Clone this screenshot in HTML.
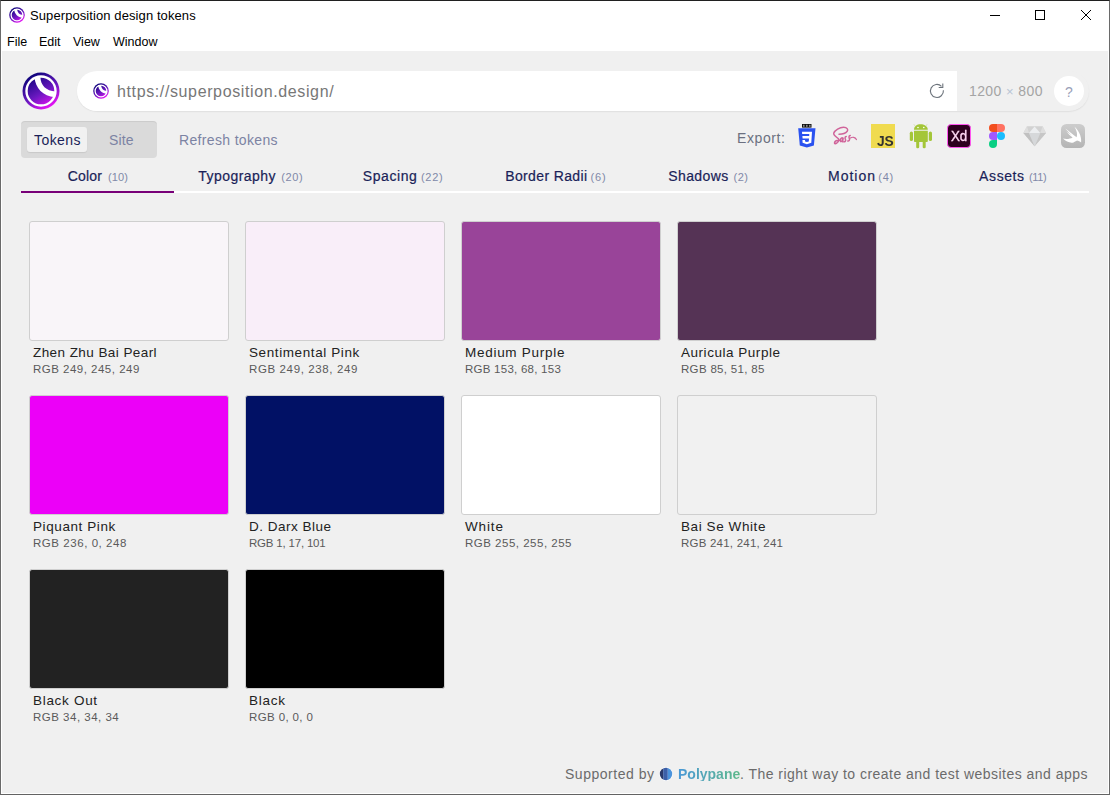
<!DOCTYPE html>
<html><head><meta charset="utf-8">
<style>
*{box-sizing:border-box;margin:0;padding:0}
html,body{width:1110px;height:795px;overflow:hidden;background:#5a5a5a;font-family:"Liberation Sans",sans-serif}
.abs{position:absolute}
#win{position:absolute;left:0;top:0;width:1110px;height:795px;border-left:1px solid #6a6a6a;border-right:1px solid #6a6a6a;border-top:1px solid #202020;border-bottom:1px solid #636363;background:#fff}
#content{position:absolute;left:1px;top:51px;width:1108px;height:743px;background:#f0f0f0;border-left:1px solid #fff;border-right:1px solid #fff;border-bottom:1px solid #fff}
.t{position:absolute;white-space:nowrap;line-height:1}
.sw{position:absolute;width:200px;height:120px;border:1px solid #cfcfcf;border-radius:3px}
.nm{position:absolute;font-size:13.5px;color:#222;white-space:nowrap;line-height:1}
.rg{position:absolute;font-size:11.5px;color:#5a5a5a;white-space:nowrap;line-height:1}
.tw{position:absolute;top:169px;font-size:14px;color:#1a1f58;white-space:nowrap;line-height:1;-webkit-text-stroke:0.2px #1a1f58}
.tc{position:absolute;top:171.6px;font-size:11px;color:#8088a8;white-space:nowrap;line-height:1}
</style></head><body>
<div id="win"></div>
<!-- title bar -->
<svg width="0" height="0" style="position:absolute"><defs>
<linearGradient id="lg2" x1="0.2" y1="0" x2="0.8" y2="1"><stop offset="0" stop-color="#000070"/><stop offset="0.55" stop-color="#6a18c0"/><stop offset="1" stop-color="#ff10ff"/></linearGradient>
<symbol id="logo" viewBox="0 0 38 38"><circle cx="19" cy="19" r="18.5" fill="url(#lg2)"/>
<circle cx="19" cy="19" r="14.5" fill="none" stroke="#fff" stroke-width="2.4"/>
<path d="M12.6 5.6 C13.2 16 21 24.5 33 25.3 L33.6 19.4 C24 19 18.6 13 18.4 5.2 Z" fill="#fff"/></symbol>
<symbol id="logos" viewBox="0 0 38 38"><circle cx="19" cy="19" r="18.5" fill="url(#lg2)"/>
<circle cx="19" cy="19" r="14" fill="none" stroke="#fff" stroke-width="3"/>
<path d="M12 5 C12.8 16.5 21 25.5 33.5 26 L34 18.6 C24.5 18.5 19.5 12.5 19.5 4.6 Z" fill="#fff"/></symbol>
</defs></svg>
<svg class="abs" style="left:9px;top:7px" width="16" height="16"><use href="#logos"/></svg>
<div class="t" style="left:30px;top:9px;font-size:13px;letter-spacing:0.09px;color:#000">Superposition design tokens</div>
<div class="abs" style="left:990px;top:15px;width:10px;height:1px;background:#000"></div>
<div class="abs" style="left:1035px;top:10px;width:10px;height:10px;border:1px solid #000"></div>
<svg class="abs" style="left:1081px;top:10px" width="10" height="10" viewBox="0 0 10 10"><path d="M0 0L10 10M10 0L0 10" stroke="#000" stroke-width="1"/></svg>
<!-- menu -->
<div class="t" style="left:7px;top:36px;font-size:12.5px;color:#000">File</div>
<div class="t" style="left:39px;top:36px;font-size:12.5px;color:#000">Edit</div>
<div class="t" style="left:73px;top:36px;font-size:12.5px;color:#000">View</div>
<div class="t" style="left:113px;top:36px;font-size:12.5px;color:#000">Window</div>

<div id="content"></div>

<!-- logo -->
<svg class="abs" style="left:22px;top:72px" width="38" height="38"><use href="#logo"/></svg>

<!-- url bar -->
<div class="abs" style="left:77px;top:71px;width:1012px;height:40px;border-radius:20px;background:#f0f0f0;box-shadow:0 1px 2px -1px rgba(0,0,0,0.22)"></div>
<div class="abs" style="left:77px;top:71px;width:880px;height:40px;border-radius:20px 0 0 20px;background:#fff"></div>
<svg class="abs" style="left:93px;top:83px" width="16" height="16"><use href="#logos"/></svg>
<div class="t" style="left:117px;top:84px;font-size:16px;letter-spacing:0.62px;color:#777">https://superposition.design/</div>
<svg class="abs" style="left:929px;top:83px" width="16" height="16" viewBox="0 0 16 16"><g fill="none" stroke="#6d747c" stroke-width="1.1"><path d="M14.4 7.3 A6.5 6.5 0 1 1 12.5 3.3"/><path d="M13.8 0.5 V4.5 H9.7"/></g></svg>
<div class="t" style="left:969px;top:84px;font-size:14px;letter-spacing:0.4px;color:#a4a4a4">1200 <span style="color:#b8c4d4;font-size:13px">×</span> 800</div>
<div class="abs" style="left:1054px;top:76px;width:30px;height:30px;border-radius:15px;background:#fff"></div>
<div class="t" style="left:1065px;top:85px;font-size:14px;color:#9aa0b8">?</div>

<!-- tokens/site -->
<div class="abs" style="left:21px;top:121px;width:136px;height:37px;border-radius:4px;background:#dadada;box-shadow:inset 0 2px 1px -1px rgba(0,0,0,0.07)"></div>
<div class="abs" style="left:27px;top:127px;width:60px;height:25px;border-radius:3px;background:#f1f1f1;box-shadow:0 1px 1px rgba(0,0,0,0.08)"></div>
<div class="t" style="left:34px;top:133px;font-size:14px;letter-spacing:0.42px;color:#1a1f58">Tokens</div>
<div class="t" style="left:109px;top:133px;font-size:14px;letter-spacing:0.1px;color:#7c83a3">Site</div>
<div class="t" style="left:179px;top:133px;font-size:14px;letter-spacing:0.34px;color:#7c83a3">Refresh tokens</div>

<!-- export -->
<div class="t" style="left:737px;top:131px;font-size:14px;letter-spacing:0.6px;color:#6b7080">Export:</div>


<!-- export icons -->
<svg class="abs" style="left:798px;top:123px" width="18" height="25" viewBox="0 0 18 25">
<rect x="4" y="1" width="9.5" height="3.6" fill="#111"/>
<rect x="5" y="1.8" width="1.6" height="2" fill="#888"/><rect x="8" y="1.8" width="1.6" height="2" fill="#888"/><rect x="11" y="1.8" width="1.6" height="2" fill="#888"/>
<path d="M0.2 5.2 H17.5 L15.9 22.4 L8.85 24.5 L1.8 22.4 Z" fill="#2a52f0"/>
<path d="M4 8.7 H14 L13.3 19.8 L8.85 21.3 L4.6 19.8 L4.45 16.9 H7 L7.1 18.5 L8.85 19 L10.8 18.5 L11 15.5 H4.6 L4.4 13.1 H11.2 L11.3 11.1 H4.15 Z" fill="#fff"/>
</svg>
<svg class="abs" style="left:832px;top:126px" width="26" height="20" viewBox="0 0 26 20">
<g fill="none" stroke="#d0649a" stroke-width="1.5" stroke-linecap="round">
<path d="M7 8.3 C10 8.3 13.5 7.5 15.2 5.3 C16.5 3.5 15 1.3 11.6 1.3 C7.5 1.3 3 4 1.8 7 C1 9.2 4.5 11 6.5 12.8 C7.5 13.8 6.5 15.5 5 16.8 C3.5 18 2.3 18 2.6 16.5 C3 15 5.5 14 8 14.3"/>
<path d="M10.5 12 C9 11.2 7.6 14.5 8.6 15.5 C9.5 16.2 10.8 13.5 11.2 11.6 L10.6 15.8"/>
<path d="M14.2 10.6 C12.6 10.8 13 12.5 13.5 13.5 C14 14.8 13 16 11.8 15.8"/>
<path d="M18.2 9.6 C16.6 9.8 16.9 11.5 17.4 12.6 C17.9 13.8 17 15.2 15.8 15"/>
<path d="M18.4 12 C20.3 10.8 23.2 10.8 24.4 13.6" stroke-width="1.2"/>
</g></svg>
<div class="abs" style="left:871px;top:124px;width:24px;height:24px;background:#f0db4f"></div>
<div class="t" style="left:877px;top:134px;font-size:14.5px;font-weight:700;color:#323330;letter-spacing:-0.3px;transform:scaleX(0.95);transform-origin:left top">JS</div>
<svg class="abs" style="left:909px;top:123px" width="24" height="26" viewBox="0 0 24 26">
<path d="M4.8 1.2 L6.3 3.2 M18.2 1.2 L16.7 3.2" stroke="#c8d890" stroke-width="0.6"/>
<path d="M5 6.8 C5 3 8 1.2 11.5 1.2 C15 1.2 18.8 3 18.8 6.8 Z" fill="#a4c639"/>
<circle cx="9" cy="4.5" r="0.8" fill="#fff"/><circle cx="14.8" cy="4.5" r="0.8" fill="#fff"/>
<path d="M5 7.7 H18.8 V18 C18.8 18.8 18.3 19.1 17.6 19.1 H6.2 C5.5 19.1 5 18.8 5 18 Z" fill="#a4c639"/>
<rect x="0.8" y="8.6" width="3.2" height="9.4" rx="1.6" fill="#a4c639"/>
<rect x="19.8" y="8.6" width="3.2" height="9.4" rx="1.6" fill="#a4c639"/>
<rect x="7.2" y="17" width="3" height="8.2" rx="1.3" fill="#a4c639"/>
<rect x="13.7" y="17" width="3" height="8.2" rx="1.3" fill="#a4c639"/>
</svg>
<div class="abs" style="left:947px;top:124px;width:24px;height:24px;background:#2e001f;border:1px solid #ff55f0;border-radius:4px"></div>
<div class="t" style="left:951px;top:128px;font-size:15.5px;color:#ffd8f4;letter-spacing:-0.3px;-webkit-text-stroke:0.35px #ffd8f4;transform:scaleX(0.86);transform-origin:left top">Xd</div>
<svg class="abs" style="left:989px;top:124px" width="16" height="24" viewBox="0 0 16 24">
<path d="M4 0 H8 V8 H4 A4 4 0 0 1 4 0 Z" fill="#f24e1e"/>
<path d="M8 0 H12 A4 4 0 0 1 12 8 H8 Z" fill="#ff7262"/>
<path d="M4 8 H8 V16 H4 A4 4 0 0 1 4 8 Z" fill="#a259ff"/>
<circle cx="12" cy="12" r="4" fill="#1abcfe"/>
<path d="M4 16 H8 V20 A4 4 0 1 1 4 16 Z" fill="#0acf83"/>
</svg>
<svg class="abs" style="left:1023px;top:126px" width="24" height="21" viewBox="0 0 24 21">
<path d="M4 0.2 H19.6 L23 7 L11.6 20.2 L0.4 7 Z" fill="#d2d2d2"/>
<path d="M0.4 7 H6 L11.6 20.2 Z" fill="#c0c0c0"/>
<path d="M23 7 H17.2 L11.6 20.2 Z" fill="#c6c6c6"/>
<path d="M6 7 H17.2 L11.6 20.2 Z" fill="#d6d8da"/>
<path d="M11.6 0.5 L17.2 7 H6 Z" fill="#eceef0"/>
<path d="M4 0.2 L6 7 H0.4 Z M19.6 0.2 L17.2 7 H23 Z" fill="#dedede"/>
</svg>
<svg class="abs" style="left:1061px;top:124px" width="24" height="24" viewBox="0 0 24 24">
<defs><linearGradient id="swg" x1="0" y1="0" x2="0" y2="1"><stop offset="0" stop-color="#cdcdcd"/><stop offset="1" stop-color="#b4b4b4"/></linearGradient></defs>
<rect x="0" y="0" width="24" height="24" rx="5.5" fill="url(#swg)"/>
<path d="M2 14.6 C5 17.6 9 19.3 12.5 18.4 C14.2 17.9 15.3 17 15.9 16.6 C17.4 16.9 19 17.6 20.1 18.5 C20.6 15 19.6 8.5 13.4 2.6 C16 7 16.6 10.5 15.6 13.2 C12.5 11 7 6.3 4.2 4.4 C6.8 7.2 9.3 9.8 10.9 11.5 C8.6 10 6.2 8.3 4.8 7.1 C7 9.6 9.8 12.2 11.6 13.6 C9 15.1 5 15.5 2 14.6 Z" fill="#fff"/>
</svg>

<!-- tabs -->
<div class="tw" style="left:67.7px;letter-spacing:0.18px">Color</div><div class="tc" style="left:108.0px;letter-spacing:0.10px">(10)</div>
<div class="tw" style="left:198.2px;letter-spacing:0.46px">Typography</div><div class="tc" style="left:281.3px;letter-spacing:0.60px">(20)</div>
<div class="tw" style="left:362.7px;letter-spacing:0.60px">Spacing</div><div class="tc" style="left:421.0px;letter-spacing:0.70px">(22)</div>
<div class="tw" style="left:505.2px;letter-spacing:0.37px">Border Radii</div><div class="tc" style="left:590.4px;letter-spacing:0.90px">(6)</div>
<div class="tw" style="left:668.2px;letter-spacing:0.42px">Shadows</div><div class="tc" style="left:733.5px;letter-spacing:0.50px">(2)</div>
<div class="tw" style="left:828.0px;letter-spacing:1.00px">Motion</div><div class="tc" style="left:878.2px;letter-spacing:0.80px">(4)</div>
<div class="tw" style="left:979.1px;letter-spacing:0.60px">Assets</div><div class="tc" style="left:1028.9px;letter-spacing:-0.30px">(11)</div>
<div class="abs" style="left:174px;top:191px;width:915px;height:2px;background:#fff"></div>
<div class="abs" style="left:21px;top:191px;width:153px;height:2px;background:#780078"></div>

<!-- swatches -->
<div class="sw" style="left:29px;top:221px;background:#f9f5f9"></div>
<div class="nm" style="left:33px;top:346px;letter-spacing:0.43px">Zhen Zhu Bai Pearl</div>
<div class="rg" style="left:33px;top:364px;letter-spacing:0.49px">RGB 249, 245, 249</div>
<div class="sw" style="left:245px;top:221px;background:#f9eef9"></div>
<div class="nm" style="left:249px;top:346px;letter-spacing:0.60px">Sentimental Pink</div>
<div class="rg" style="left:249px;top:364px;letter-spacing:0.62px">RGB 249, 238, 249</div>
<div class="sw" style="left:461px;top:221px;background:#994499"></div>
<div class="nm" style="left:465px;top:346px;letter-spacing:0.72px">Medium Purple</div>
<div class="rg" style="left:465px;top:364px;letter-spacing:0.25px">RGB 153, 68, 153</div>
<div class="sw" style="left:677px;top:221px;background:#553355"></div>
<div class="nm" style="left:681px;top:346px;letter-spacing:0.53px">Auricula Purple</div>
<div class="rg" style="left:681px;top:364px;letter-spacing:0.32px">RGB 85, 51, 85</div>
<div class="sw" style="left:29px;top:395px;background:#ec00f8"></div>
<div class="nm" style="left:33px;top:520px;letter-spacing:0.59px">Piquant Pink</div>
<div class="rg" style="left:33px;top:538px;letter-spacing:0.55px">RGB 236, 0, 248</div>
<div class="sw" style="left:245px;top:395px;background:#011165"></div>
<div class="nm" style="left:249px;top:520px;letter-spacing:0.49px">D. Darx Blue</div>
<div class="rg" style="left:249px;top:538px;letter-spacing:-0.20px">RGB 1, 17, 101</div>
<div class="sw" style="left:461px;top:395px;background:#ffffff"></div>
<div class="nm" style="left:465px;top:520px;letter-spacing:0.85px">White</div>
<div class="rg" style="left:465px;top:538px;letter-spacing:0.50px">RGB 255, 255, 255</div>
<div class="sw" style="left:677px;top:395px;background:#f1f1f1"></div>
<div class="nm" style="left:681px;top:520px;letter-spacing:0.58px">Bai Se White</div>
<div class="rg" style="left:681px;top:538px;letter-spacing:0.22px">RGB 241, 241, 241</div>
<div class="sw" style="left:29px;top:569px;background:#222222"></div>
<div class="nm" style="left:33px;top:694px;letter-spacing:0.70px">Black Out</div>
<div class="rg" style="left:33px;top:712px;letter-spacing:0.50px">RGB 34, 34, 34</div>
<div class="sw" style="left:245px;top:569px;background:#000000"></div>
<div class="nm" style="left:249px;top:694px;letter-spacing:0.76px">Black</div>
<div class="rg" style="left:249px;top:712px;letter-spacing:0.38px">RGB 0, 0, 0</div>

<!-- footer -->
<div class="t" style="left:565px;top:767px;font-size:14px;letter-spacing:0.52px;color:#6b6b6b">Supported by</div>
<svg class="abs" style="left:659px;top:767px" width="14" height="14" viewBox="0 0 14 14">
<defs><clipPath id="pc"><circle cx="7" cy="7" r="6.2"/></clipPath></defs>
<circle cx="7" cy="7" r="6.9" fill="#fff" opacity="0.7"/>
<g clip-path="url(#pc)"><rect x="0" y="0" width="4.2" height="14" fill="#2b3a6b"/><rect x="4.2" y="0" width="4.6" height="14" fill="#3c5fa8"/><rect x="8.8" y="0" width="5.2" height="14" fill="#4b93dc"/></g>
</svg>
<div class="t" style="left:678px;top:767px;font-size:14px;font-weight:700;letter-spacing:0px;background:linear-gradient(90deg,#4a98d6,#5db98a);-webkit-background-clip:text;background-clip:text;color:transparent">Polypane</div>
<div class="t" style="left:740px;top:767px;font-size:14px;letter-spacing:0.47px;color:#6b6b6b">. The right way to create and test websites and apps</div>
</body></html>
